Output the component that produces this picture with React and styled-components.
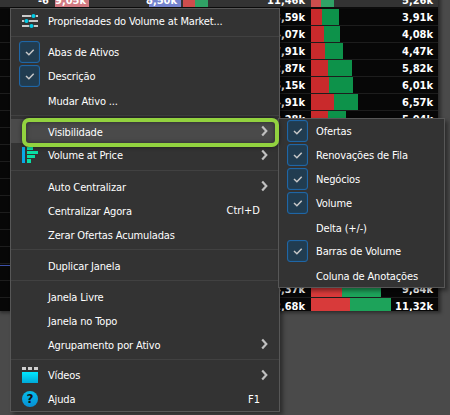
import React from 'react';
import styled, { createGlobalStyle } from 'styled-components';

const GlobalStyle = createGlobalStyle`
  body {
    margin: 0;
    overflow: hidden;
    background: #4a4a4a;
  }
`;

const uiFont = `'DejaVu Sans Condensed', 'DejaVu Sans', sans-serif`;

const ladder = [
  { total: '13,59k', value: '3,91k', red: 11, green: 17 },
  { total: '14,07k', value: '4,08k', red: 13, green: 16 },
  { total: '17,91k', value: '4,47k', red: 14, green: 18 },
  { total: '12,87k', value: '5,82k', red: 17, green: 24 },
  { total: '16,15k', value: '6,01k', red: 18, green: 24 },
  { total: '14,91k', value: '6,57k', red: 23, green: 24 },
  { total: '13,28k', value: '5,04k', red: 17, green: 18 },
  ...Array.from({ length: 9 }, () => ({})),
  { total: '14,37k', value: '9,84k', red: 31, green: 39, bright: true },
  { total: '12,68k', value: '11,32k', red: 39, green: 41, bright: true }
];

const menu = [
  { label: 'Propriedades do Volume at Market...', icon: 'sliders' },
  { separator: true },
  { label: 'Abas de Ativos', checked: true },
  { label: 'Descrição', checked: true },
  { label: 'Mudar Ativo ...' },
  { separator: true },
  { label: 'Visibilidade', arrow: true, active: true },
  { label: 'Volume at Price', icon: 'profile', arrow: true },
  { separator: true },
  { label: 'Auto Centralizar', arrow: true },
  { label: 'Centralizar Agora', shortcut: 'Ctrl+D' },
  { label: 'Zerar Ofertas Acumuladas' },
  { separator: true },
  { label: 'Duplicar Janela' },
  { separator: true },
  { label: 'Janela Livre' },
  { label: 'Janela no Topo' },
  { label: 'Agrupamento por Ativo', arrow: true },
  { separator: true },
  { label: 'Vídeos', icon: 'video', arrow: true },
  { label: 'Ajuda', icon: 'help', shortcut: 'F1' }
];

const submenu = [
  { label: 'Ofertas', checked: true },
  { label: 'Renovações de Fila', checked: true },
  { label: 'Negócios', checked: true },
  { label: 'Volume', checked: true },
  { label: 'Delta (+/-)' },
  { label: 'Barras de Volume', checked: true },
  { label: 'Coluna de Anotações' }
];

const Desktop = styled.div`
  position: relative;
  display: flow-root;
  width: 450px;
  height: 415px;
  overflow: hidden;
  background: #4a4a4a;
  font-family: ${uiFont};
`;

// scrolled half a row, so the current price row is only partly in view
const Book = styled.div`
  width: 438px;
  height: 319px;
  margin-top: -8px;
  overflow: hidden;
  background: #070707;
  border-right: 1px solid #2b2b2b;
  box-shadow: 1px 1px 3px 1px #2d2d2d;
  color: #fff;
  font: bold 11px/17px ${uiFont};
`;

const BookRow = styled.div`
  display: grid;
  grid-template-columns: 305px 1fr;
  grid-template-rows: 100%;
  column-gap: 6px;
  height: 16px;
  border-bottom: 1px solid #1d1d1d;
`;

const SpreadRow = styled(BookRow)`
  background: linear-gradient(#3c50a8, #3c50a8) 0 1px / 100% 1px no-repeat;
`;

const CurrentRow = styled(BookRow)`
  height: 15px;
  border-bottom: 2px solid #0c0c0c;
  background: #333;
`;

const CurrentCells = styled.div`
  display: grid;
  grid-template-columns: 49px 6px 34px 60px 32px 2px 12px 13px 97px;
  grid-template-rows: 100%;
`;

const Cell = styled.span`
  display: flex;
  justify-content: flex-end;
  padding-right: ${(p) => p.$pad || 0}px;
  background: ${(p) => p.$bg || 'transparent'};
`;

const Total = styled.span`
  text-align: right;
`;

const Bars = styled.div`
  display: grid;
  grid-template-columns: ${(p) => p.$red || 0}px ${(p) => p.$green || 0}px 1fr;
  grid-template-rows: 100%;
`;

const Bar = styled.span`
  background: ${(p) => p.$color};
`;

const Value = styled.span`
  padding-right: 5px;
  text-align: right;
`;

const Menu = styled.div`
  position: absolute;
  left: ${(p) => p.$left}px;
  top: ${(p) => p.$top}px;
  box-sizing: border-box;
  width: ${(p) => p.$width}px;
  border: 1px solid #575757;
  background: #333;
  box-shadow: 3px 3px 4px rgba(0, 0, 0, 0.4);
`;

const Item = styled.div`
  display: grid;
  grid-template-columns: 37px 1fr auto;
  grid-template-rows: 24px;
  align-items: center;
  height: 24px;
  padding-right: 11px;
  background: ${(p) => (p.$active ? '#4a4a4a' : 'transparent')};
  color: #fff;
  font-size: 11px;
  line-height: 25px;
  white-space: pre;
`;

const IconSlot = styled.span`
  display: flex;
  align-items: center;
  height: 24px;
  padding-left: ${(p) => (p.$check ? 8 : 11)}px;
`;

const CheckBox = styled.span`
  display: flex;
  align-items: center;
  justify-content: center;
  box-sizing: border-box;
  width: 21px;
  height: 22px;
  border: 1px solid #1f66a6;
  border-radius: 3px;
  background: #213c50;
  box-shadow: inset 0 0 1px #1f66a6;
`;

const Label = styled.span`
  align-self: start;
  padding-top: ${(p) => (p.$plain ? 1 : 0)}px;
  letter-spacing: -0.15px;
`;

const Shortcut = styled.span`
  align-self: start;
  padding-right: 8px;
`;

const Separator = styled.div`
  height: 1px;
  margin: 3px 0;
  background: #414141;
`;

const Highlight = styled.div`
  position: absolute;
  left: 22px;
  top: 118px;
  box-sizing: border-box;
  width: 257px;
  height: 29px;
  border: 4px solid #92d23f;
  border-radius: 7px;
  box-shadow: 0 0 4px rgba(0, 0, 0, 0.5), inset 0 0 5px rgba(0, 0, 0, 0.4);
`;

const Check = () => (
  <svg width='10' height='8' viewBox='0 0 10 8'>
    <path d='M1 4 3.9 6.7 8.7 1.7' fill='none' stroke='#c8c8c8' strokeWidth='1.5' />
  </svg>
);

const Chevron = () => (
  <svg width='7' height='12' viewBox='0 0 7 12' display='block'>
    <path d='M1.2 1.5 5.3 6 1.2 10.5' fill='none' stroke='#c0c0c0' strokeWidth='2.2' />
  </svg>
);

const icons = {
  sliders: (
    <svg width='16' height='14' viewBox='0 0 16 14'>
      <path d='M0 2h16M0 7h16M0 12h16' stroke='#c9c9c9' strokeWidth='2' />
      <path d='M9.2 2h4.6M2.2 7h4.6M7.2 12h4.6' stroke='#333' strokeWidth='4' />
      <circle cx='11.5' cy='2' r='2' fill='#00cde8' />
      <circle cx='4.5' cy='7' r='2' fill='#00cde8' />
      <circle cx='9.5' cy='12' r='2' fill='#00cde8' />
    </svg>
  ),
  profile: (
    <svg width='16' height='16' viewBox='0 0 16 16' shapeRendering='crispEdges'>
      <path d='M0 0h3v16H0z' fill='#08a8e8' />
      <path d='M5 0h6v3H5zM5 4h11v3H5zM5 8h8v3H5zM5 12h4v4H5z' fill='#09dfa5' />
    </svg>
  ),
  video: (
    <svg width='16' height='16' viewBox='0 0 16 16'>
      <defs>
        <linearGradient id='screen' x1='0' y1='0' x2='0' y2='1'>
          <stop stopColor='#00e8ff' />
          <stop offset='1' stopColor='#00a8d8' />
        </linearGradient>
      </defs>
      <path d='M0 0h4v3H0zM6 0h4v3H6zM12 0h4v3h-4z' fill='#cfcfcf' />
      <path d='M0 5h16v11H0z' fill='url(#screen)' />
    </svg>
  )
};

const HelpBadge = styled.span`
  width: 16px;
  height: 16px;
  border-radius: 50%;
  background: linear-gradient(#06bdea, #078fd5);
  color: #111;
  font: bold 12px/16px 'DejaVu Sans', sans-serif;
  text-align: center;
`;

const MenuItem = ({ item }) => (
  <Item $active={item.active}>
    <IconSlot $check={item.checked}>
      {item.checked && (
        <CheckBox>
          <Check />
        </CheckBox>
      )}
      {item.icon === 'help' ? <HelpBadge>?</HelpBadge> : icons[item.icon]}
    </IconSlot>
    <Label $plain={!item.icon && !item.checked}>{item.label}</Label>
    {item.arrow && <Chevron />}
    {item.shortcut && <Shortcut>{item.shortcut}</Shortcut>}
  </Item>
);

const renderItems = (items) =>
  items.map((item, i) =>
    item.separator ? <Separator key={i} /> : <MenuItem item={item} key={i} />
  );

const App = () => (
  <Desktop>
    <GlobalStyle />
    <Book>
      <CurrentRow>
        <CurrentCells>
          <Cell>-6</Cell>
          <Cell />
          <Cell $bg='#d37a82' $pad={3}>9,05k</Cell>
          <Cell />
          <Cell $bg='#7584cf' $pad={4}>8,50k</Cell>
          <Cell />
          <Cell $bg='#cd4d4d' />
          <Cell $bg='#30a266' />
          <Cell>11,46k</Cell>
        </CurrentCells>
        <Bars $red={10} $green={13}>
          <Bar $color='#cd4d4d' />
          <Bar $color='#30a266' />
          <Value>5,26k</Value>
        </Bars>
      </CurrentRow>
      {ladder.map((row, i) =>
        i === 15 ? (
          <SpreadRow key={i} />
        ) : (
          <BookRow key={i}>
            <Total>{row.total}</Total>
            <Bars $red={row.red} $green={row.green}>
              <Bar $color={row.bright ? '#d83a3a' : '#c92a2c'} />
              <Bar $color={row.bright ? '#1da35a' : '#0d924a'} />
              <Value>{row.value}</Value>
            </Bars>
          </BookRow>
        )
      )}
    </Book>
    <Menu $left={10} $top={8} $width={270}>
      {renderItems(menu)}
    </Menu>
    <Menu $left={278} $top={118} $width={167}>
      {renderItems(submenu)}
    </Menu>
    <Highlight />
  </Desktop>
);

export default App;
